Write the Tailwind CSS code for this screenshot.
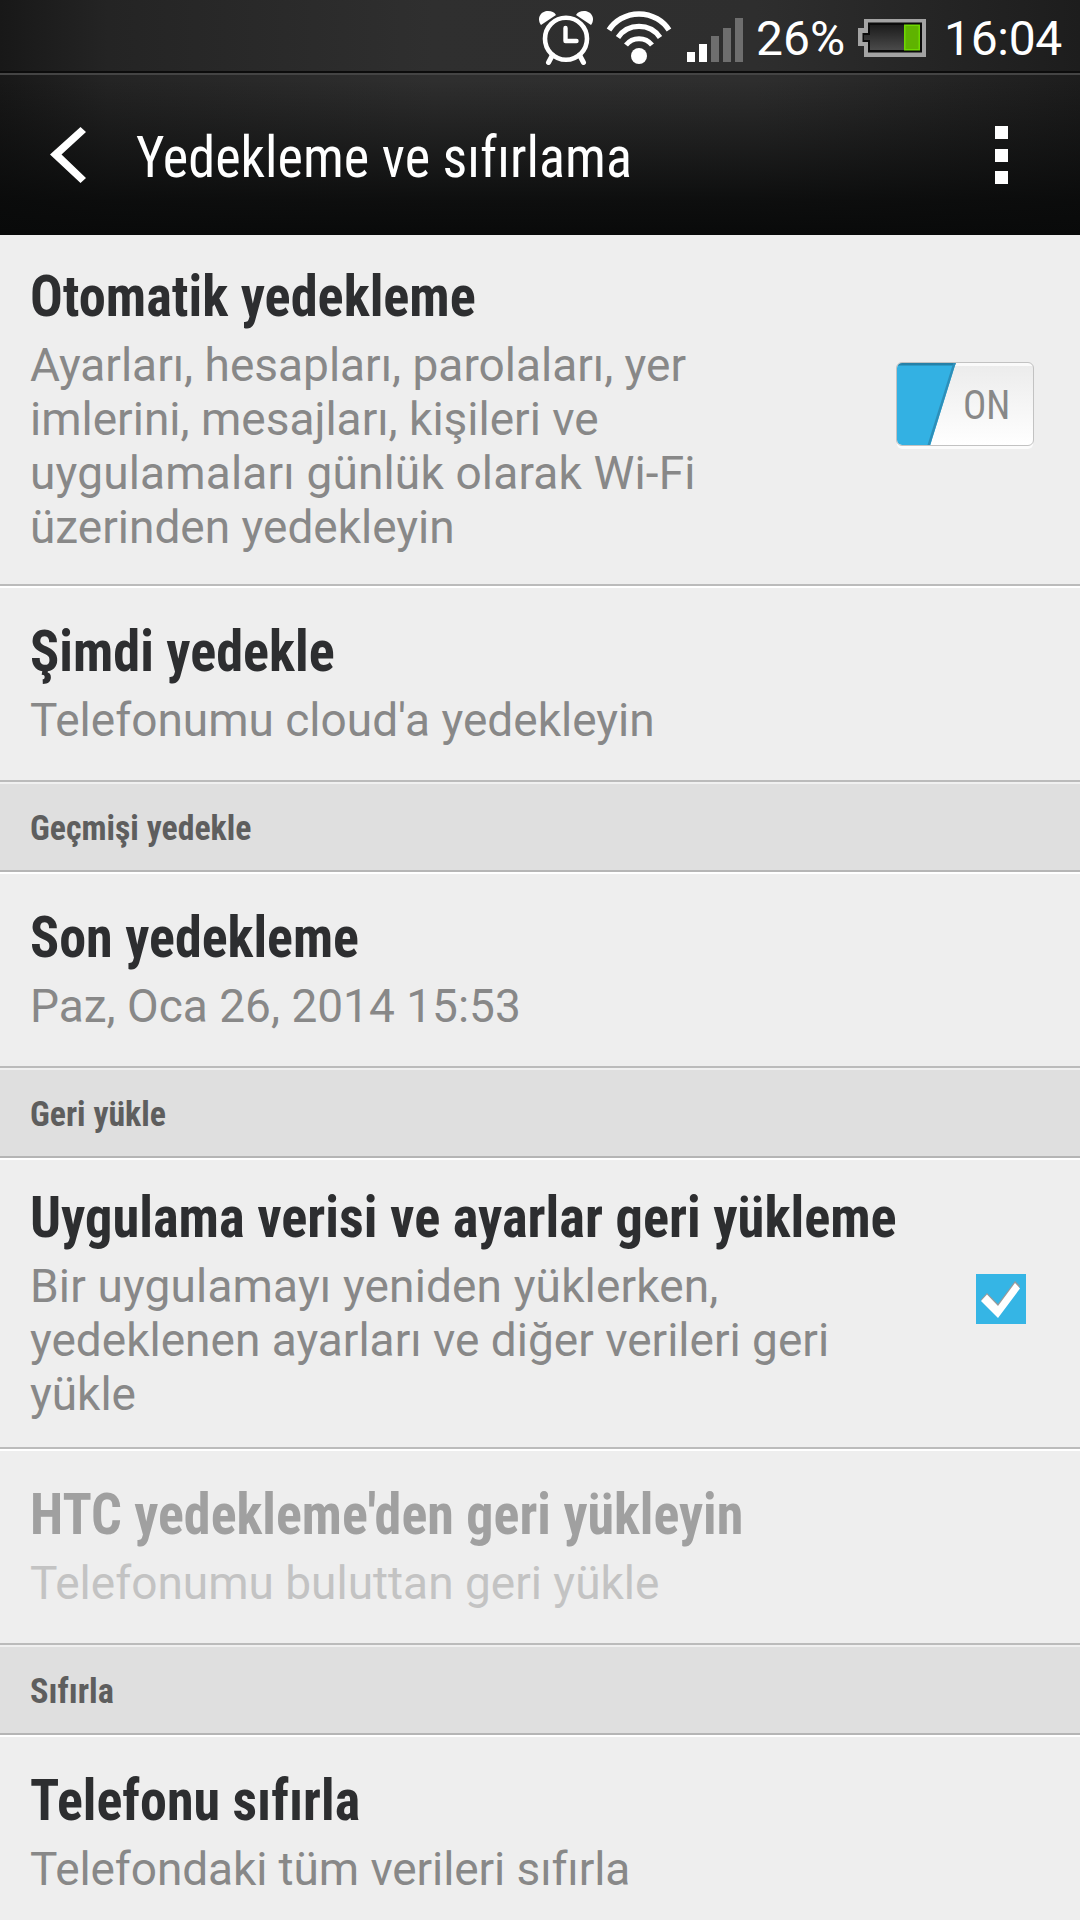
<!DOCTYPE html>
<html lang="tr">
<head>
  <meta charset="UTF-8" />
  <meta name="viewport" content="width=device-width, initial-scale=1.0"/>
  <title>Yedekleme ve sıfırlama</title>
  <script src="https://cdn.jsdelivr.net/npm/@tailwindcss/browser@4"></script>
</head>
<body class="w-[1080px] h-[1920px] overflow-hidden bg-[#eeeeee] font-['Roboto',sans-serif]">

  <div class="h-[235px] bg-[linear-gradient(to_bottom,transparent_0px,transparent_80px,rgba(8,9,9,0.85)_200px,#090a0a_235px),linear-gradient(to_right,#181818_0%,#242424_10%,#2f2f2f_40%,#2e2e2e_70%,#1d1d1d_100%)]">
    <!-- Status bar -->
    <div class="flex justify-end h-[73px] border-b-2 border-[#0c0c0c] pr-[18px]">
      <svg class="w-[222px] h-[71px] shrink-0" viewBox="530 0 222 71" fill="none">
        <g stroke="#fff">
          <circle cx="566" cy="38.7" r="21" stroke-width="4.6"/>
          <path d="M565.5 28v13h11" stroke-width="4.4" stroke-linecap="round" stroke-linejoin="round"/>
          <path d="M552.5 55l-4 7.500M579.500 55l4 7.500" stroke-width="5" stroke-linecap="round"/>
        </g>
        <path d="M541 25C536 18 541 11 548 11C552 11 554 12 556 15Z" fill="#fff"/>
        <path d="M591 25C596 18 591 11 584 11C580 11 578 12 576 15Z" fill="#fff"/>
        <g stroke="#fff">
          <path d="M609 30A36 36 0 0 1 669 30" stroke-width="5.5"/>
          <path d="M618 37.500A25.500 25.500 0 0 1 660 37.500" stroke-width="5.200"/>
          <path d="M626 45A16.500 16.500 0 0 1 652 45" stroke-width="5"/>
        </g>
        <circle cx="639" cy="56" r="8" fill="#fff"/>
        <path d="M687 52h8v10h-8zM699 44h8v18h-8z" fill="#fff"/>
        <path d="M711 36h8v26h-8zM723 28h8v34h-8zM735 18h8v44h-8z" fill="#6e6e6e"/>
      </svg>
      <div class="w-[106px] pl-1 pt-[11px] text-[48px] leading-[56px] text-white whitespace-nowrap">26%</div>
      <svg class="w-[68px] h-[71px] shrink-0" viewBox="858 0 68 71">
        <defs>
          <linearGradient id="cell" x1="0" y1="0" x2="0" y2="1">
            <stop offset="0" stop-color="#1c1c1c"/>
            <stop offset="1" stop-color="#4a4a4a"/>
          </linearGradient>
        </defs>
        <path d="M864 19H926V57H864V46H858V28H864Z" fill="#a3a3a3"/>
        <path d="M868 22.500H922V52.500H868V42H862.500V33H868Z" fill="#0b0b0b"/>
        <path d="M870 25H904V50H870V40H864V35H870Z" fill="url(#cell)"/>
        <rect x="904" y="24.500" width="16" height="26" fill="#6fd800"/>
        <rect x="905.500" y="26" width="13" height="23" fill="#5fb300"/>
      </svg>
      <div class="w-[136px] pl-[18px] pt-[11px] text-[48px] leading-[56px] tracking-[-0.3px] text-white whitespace-nowrap">16:04</div>
    </div>

    <!-- Action bar -->
    <div class="flex items-start h-[162px] border-t-2 border-[#444444]">
      <svg class="w-[36px] h-[56px] ml-[50px] mt-[52px] shrink-0" viewBox="50 127 36 56">
        <path d="M80.500 127L86 132L61.500 154.500L86 178L80.500 183L50 154.500Z" fill="#fff"/>
      </svg>
      <h1 class="ml-[50px] mt-[48px] text-[58px] leading-[68px] text-white whitespace-nowrap origin-left scale-x-[0.936] [font-stretch:75%]">Yedekleme ve sıfırlama</h1>
      <div class="flex flex-col gap-[9.500px] ml-auto mr-[72px] mt-[51px]">
        <div class="size-[13px] bg-white"></div>
        <div class="size-[13px] bg-white"></div>
        <div class="size-[13px] bg-white"></div>
      </div>
    </div>
  </div>

  <main>
    <div class="flex justify-between h-[351px] pl-[30px] pt-[27px] border-b-2 border-[#bbbbbb]">
      <div>
        <h2 class="text-[58px] leading-[68px] font-bold text-[#2d2e30] whitespace-nowrap origin-left scale-x-[0.938] [font-stretch:75%]">Otomatik yedekleme</h2>
        <p class="mt-2 text-[46px] leading-[54px] text-[#888888] whitespace-nowrap">Ayarları, hesapları, parolaları, yer<br>imlerini, mesajları, kişileri ve<br><span class="tracking-[0.17px]">uygulamaları günlük olarak Wi-Fi</span><br>üzerinden yedekleyin</p>
      </div>
      <div class="relative w-[138px] h-[84px] mt-[100px] mr-[46px] shrink-0">
        <svg class="w-[138px] h-[88px]" viewBox="0 0 138 88">
          <defs>
            <linearGradient id="knob" x1="0" y1="0" x2="0" y2="1">
              <stop offset="0" stop-color="#ebebeb"/>
              <stop offset="1" stop-color="#ffffff"/>
            </linearGradient>
            <clipPath id="track"><rect x="1" y="1" width="136" height="82" rx="5"/></clipPath>
          </defs>
          <rect x="1" y="4" width="136" height="83" rx="5" fill="#fbfbfb"/>
          <g clip-path="url(#track)">
            <rect width="138" height="84" fill="url(#knob)"/>
            <path d="M58 0H138V4H58Z" fill="#fafafa"/>
            <path d="M0 0H60L34 84H0Z" fill="#33b1e3"/>
            <path d="M0 0H60L59 3.500H0Z" fill="#2581a8"/>
            <path d="M58.500 1L32.500 84" stroke="#2d8fb9" stroke-width="2.500"/>
          </g>
          <rect x=".5" y=".5" width="137" height="83" rx="5.500" fill="none" stroke="#c2c2c2"/>
        </svg>
        <span class="absolute left-[67px] top-[21px] text-[40px] leading-[46px] origin-left scale-x-[0.97] text-[#888888] [font-stretch:75%]">ON</span>
      </div>
    </div>

    <div class="h-[196px] pl-[30px] pt-[29px] border-t-2 border-t-white border-b-2 border-b-[#bbbbbb]">
      <h2 class="text-[58px] leading-[68px] font-bold text-[#2d2e30] whitespace-nowrap origin-left scale-x-[0.936] [font-stretch:75%]">Şimdi yedekle</h2>
      <p class="mt-2 text-[46px] leading-[54px] text-[#888888] whitespace-nowrap">Telefonumu cloud'a yedekleyin</p>
    </div>

    <div class="h-[90px] pl-[30px] pt-[24px] bg-[#dfdfdf] border-t-2 border-t-[#f0f0f0] border-b-2 border-b-[#b5b5b5]">
      <h3 class="text-[35px] leading-[42px] font-bold text-[#5e5e5e] origin-left scale-x-[0.965] [font-stretch:75%]">Geçmişi yedekle</h3>
    </div>

    <div class="h-[196px] pl-[30px] pt-[29px] border-t-2 border-t-white border-b-2 border-b-[#bbbbbb]">
      <h2 class="text-[58px] leading-[68px] font-bold text-[#2d2e30] whitespace-nowrap origin-left scale-x-[0.933] [font-stretch:75%]">Son yedekleme</h2>
      <p class="mt-2 text-[46px] leading-[54px] text-[#888888] whitespace-nowrap">Paz, Oca 26, 2014 15:53</p>
    </div>

    <div class="h-[90px] pl-[30px] pt-[24px] bg-[#dfdfdf] border-t-2 border-t-[#f0f0f0] border-b-2 border-b-[#b5b5b5]">
      <h3 class="text-[35px] leading-[42px] font-bold text-[#5e5e5e] origin-left scale-x-[0.965] [font-stretch:75%]">Geri yükle</h3>
    </div>

    <div class="flex justify-between h-[291px] pl-[30px] pt-[23px] border-t-2 border-t-white border-b-2 border-b-[#bbbbbb]">
      <div class="w-[880px]">
        <h2 class="text-[58px] leading-[68px] font-bold text-[#2d2e30] whitespace-nowrap origin-left scale-x-[0.939] [font-stretch:75%]">Uygulama verisi ve ayarlar geri yükleme</h2>
        <p class="mt-2 text-[46px] leading-[54px] text-[#888888] whitespace-nowrap"><span class="tracking-[0.15px]">Bir uygulamayı yeniden yüklerken,</span><br>yedeklenen ayarları ve diğer verileri geri<br>yükle</p>
      </div>
      <svg class="size-[50px] mt-[91px] mr-[54px] shrink-0" viewBox="0 0 50 50">
        <rect width="50" height="50" fill="#35b5e5"/>
        <path d="M5 25.500L11 19L22 30L39 7L44 12L22 42.500Z" fill="#9a9a9a"/>
        <path d="M5 27L11 20.500L22 32L39 9L44 14.500L22 44Z" fill="#fff"/>
      </svg>
    </div>

    <div class="h-[196px] pl-[30px] pt-[29px] border-t-2 border-t-white border-b-2 border-b-[#bbbbbb]">
      <h2 class="text-[58px] leading-[68px] font-bold text-[#a0a0a0] whitespace-nowrap origin-left scale-x-[0.932] [font-stretch:75%]">HTC yedekleme'den geri yükleyin</h2>
      <p class="mt-2 text-[46px] leading-[54px] text-[#c3c3c3] whitespace-nowrap">Telefonumu buluttan geri yükle</p>
    </div>

    <div class="h-[90px] pl-[30px] pt-[24px] bg-[#dfdfdf] border-t-2 border-t-[#f0f0f0] border-b-2 border-b-[#b5b5b5]">
      <h3 class="text-[35px] leading-[42px] font-bold text-[#5e5e5e] origin-left scale-x-[0.98] [font-stretch:75%]">Sıfırla</h3>
    </div>

    <div class="h-[196px] pl-[30px] pt-[29px] border-t-2 border-t-white">
      <h2 class="text-[58px] leading-[68px] font-bold text-[#2d2e30] whitespace-nowrap origin-left scale-x-[0.932] [font-stretch:75%]">Telefonu sıfırla</h2>
      <p class="mt-2 text-[46px] leading-[54px] tracking-[-0.09px] text-[#888888] whitespace-nowrap">Telefondaki tüm verileri sıfırla</p>
    </div>
  </main>

</body>
</html>
